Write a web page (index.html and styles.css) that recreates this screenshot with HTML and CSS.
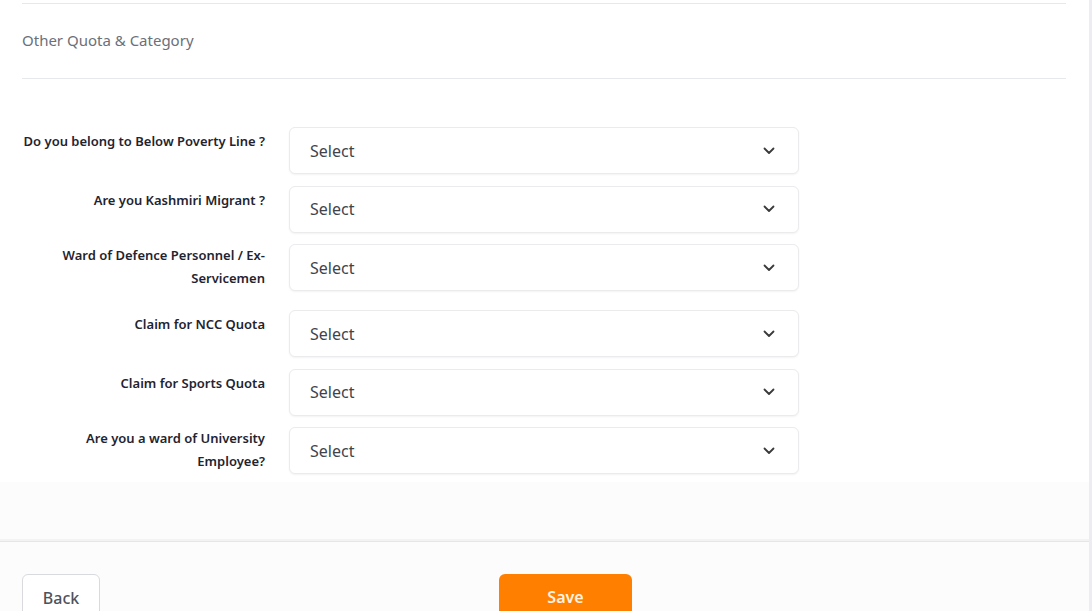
FILE: index.html
```html
<!DOCTYPE html>
<html lang="en">
<head>
<meta charset="utf-8">
<title>Other Quota &amp; Category</title>
<link rel="stylesheet" href="styles.css">
</head>
<body>
<div class="page">
  <section class="card">
    <div class="section-head">
      <h2 class="section-title">Other Quota &amp; Category</h2>
    </div>
    <form class="form">
      <div class="row">
        <label class="label">Do you belong to Below Poverty Line ?</label>
        <div class="select"><span>Select</span><svg class="chev" viewBox="0 0 12 8" width="12" height="8"><path d="M1.5 1.5 L6 6 L10.5 1.5" fill="none" stroke="#3a3a3a" stroke-width="1.8" stroke-linecap="round" stroke-linejoin="round"/></svg></div>
      </div>
      <div class="row">
        <label class="label">Are you Kashmiri Migrant ?</label>
        <div class="select"><span>Select</span><svg class="chev" viewBox="0 0 12 8" width="12" height="8"><path d="M1.5 1.5 L6 6 L10.5 1.5" fill="none" stroke="#3a3a3a" stroke-width="1.8" stroke-linecap="round" stroke-linejoin="round"/></svg></div>
      </div>
      <div class="row">
        <label class="label label--wrap">Ward of Defence Personnel / Ex-<br>Servicemen</label>
        <div class="select"><span>Select</span><svg class="chev" viewBox="0 0 12 8" width="12" height="8"><path d="M1.5 1.5 L6 6 L10.5 1.5" fill="none" stroke="#3a3a3a" stroke-width="1.8" stroke-linecap="round" stroke-linejoin="round"/></svg></div>
      </div>
      <div class="row">
        <label class="label">Claim for NCC Quota</label>
        <div class="select"><span>Select</span><svg class="chev" viewBox="0 0 12 8" width="12" height="8"><path d="M1.5 1.5 L6 6 L10.5 1.5" fill="none" stroke="#3a3a3a" stroke-width="1.8" stroke-linecap="round" stroke-linejoin="round"/></svg></div>
      </div>
      <div class="row">
        <label class="label">Claim for Sports Quota</label>
        <div class="select"><span>Select</span><svg class="chev" viewBox="0 0 12 8" width="12" height="8"><path d="M1.5 1.5 L6 6 L10.5 1.5" fill="none" stroke="#3a3a3a" stroke-width="1.8" stroke-linecap="round" stroke-linejoin="round"/></svg></div>
      </div>
      <div class="row">
        <label class="label label--wrap">Are you a ward of University<br>Employee?</label>
        <div class="select"><span>Select</span><svg class="chev" viewBox="0 0 12 8" width="12" height="8"><path d="M1.5 1.5 L6 6 L10.5 1.5" fill="none" stroke="#3a3a3a" stroke-width="1.8" stroke-linecap="round" stroke-linejoin="round"/></svg></div>
      </div>
    </form>
  </section>
  <div class="spacer"></div>
  <footer class="footer">
    <button class="btn btn--back" type="button">Back</button>
    <button class="btn btn--save" type="button">Save</button>
  </footer>
</div>
</body>
</html>
```

FILE: styles.css
```css
* { box-sizing: border-box; }

html, body {
  margin: 0;
  padding: 0;
}

body {
  background: #fcfcfc;
  font-family: "Noto Sans", "Open Sans", sans-serif;
  color: #1f2430;
  overflow: hidden;
}

.page {
  width: 1092px;
  height: 611px;
  border-right: 3px solid #ededf1;
  display: flex;
  flex-direction: column;
  overflow: hidden;
}

.card {
  flex-shrink: 0;
  background: #ffffff;
  padding: 3px 23px 0 22px;
}

.section-head {
  border-top: 1px solid #e7e8eb;
  border-bottom: 1px solid #e7e8eb;
  height: 76px;
  display: flex;
  align-items: center;
}

.section-title {
  margin: 0;
  padding-bottom: 2px;
  font-size: 15px;
  font-weight: 400;
  color: #6b7079;
}

.form {
  padding-top: 48px;
  display: flex;
  flex-direction: column;
  gap: 11.5px;
}

.row {
  display: grid;
  grid-template-columns: 243px 510px;
  column-gap: 24px;
  align-items: start;
}

.label {
  text-align: right;
  font-size: 13px;
  font-weight: 600;
  line-height: 23px;
  color: #1f2430;
  padding: 3px 0 0;
}

.label--wrap {
  padding: 0 0 8.5px;
}

.select {
  height: 47px;
  border: 1px solid #ebebed;
  border-radius: 6px;
  background: #fff;
  box-shadow: 0 1px 2px rgba(0, 0, 0, 0.05);
  display: flex;
  align-items: center;
  justify-content: space-between;
  padding: 0 23px 0 20px;
  font-size: 16px;
  color: #3f444c;
}

.chev {
  display: block;
}

.spacer {
  flex-shrink: 0;
  height: 59px;
}

.footer {
  flex-shrink: 0;
  border-top: 1px solid #e6e6e8;
  box-shadow: 0 -2px 0 #f3f3f4;
  padding: 32px 0 0 22px;
  display: flex;
  align-items: flex-start;
}

.btn {
  font-family: inherit;
  font-size: 16px;
  height: 46px;
  border-radius: 6px;
  cursor: pointer;
  padding: 0;
  line-height: 46px;
  flex-shrink: 0;
}

.btn--back {
  width: 78px;
  background: #ffffff;
  border: 1px solid #d9dadd;
  color: #4d535c;
  font-weight: 500;
}

.btn--save {
  width: 133px;
  margin-left: 399px;
  background: #ff8000;
  border: none;
  color: #fff3e2;
  font-weight: 600;
}
```
